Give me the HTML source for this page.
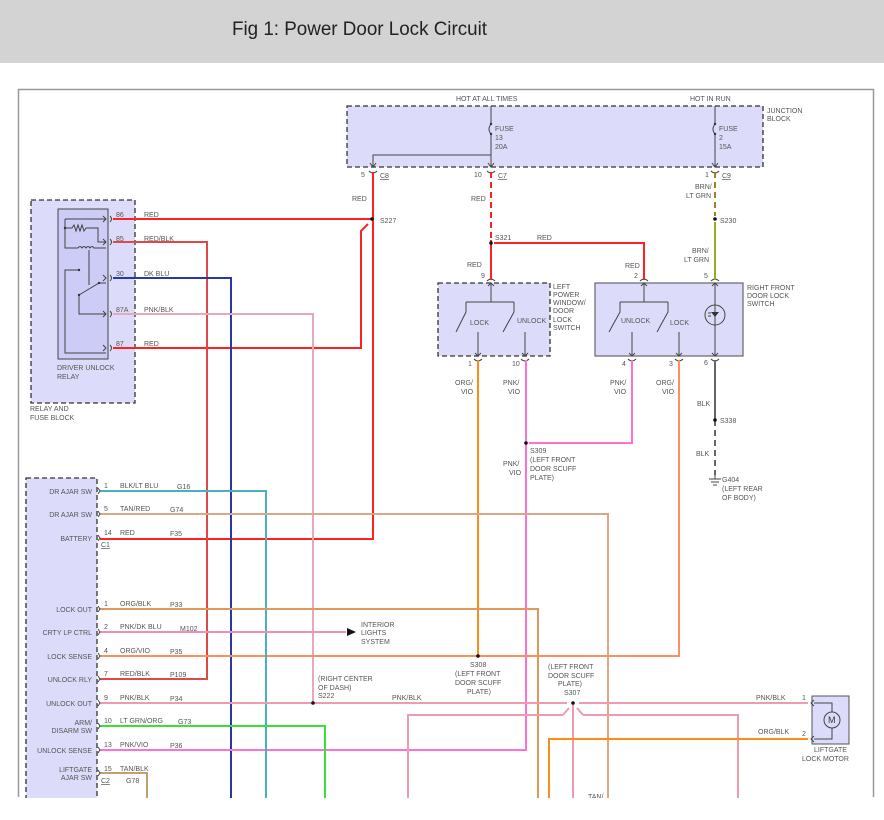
<!DOCTYPE html>
<html><head><meta charset="utf-8"><style>
html,body{margin:0;padding:0;background:#fff;width:884px;height:820px;overflow:hidden}
svg{display:block}
text{font-family:"Liberation Sans",sans-serif;font-size:7px;fill:#555}
.w{fill:none;stroke-width:2}
.k{fill:none;stroke:#444;stroke-width:1}
</style></head><body>
<svg width="884" height="820" viewBox="0 0 884 820" xmlns="http://www.w3.org/2000/svg">
<rect x="0" y="0" width="884" height="63" fill="#d3d3d3"/>
<text x="232" y="35" style="font-size:19px;fill:#222" textLength="255" lengthAdjust="spacingAndGlyphs">Fig 1: Power Door Lock Circuit</text>
<path d="M18.5 797V89.5H873.5V797" fill="none" stroke="#999" stroke-width="1.5"/>

<!-- boxes -->
<rect x="347" y="106" width="416" height="61" fill="#dcdcfa" stroke="#333" stroke-width="1.3" stroke-dasharray="5,3"/>
<rect x="31" y="200" width="104" height="203" fill="#dcdcfa" stroke="#333" stroke-width="1.3" stroke-dasharray="5,3"/>
<rect x="58" y="209" width="50" height="150" fill="#ccccf6" stroke="#444" stroke-width="1"/>
<rect x="438" y="283" width="112" height="73" fill="#dcdcfa" stroke="#333" stroke-width="1.3" stroke-dasharray="5,3"/>
<rect x="595" y="283" width="148" height="73" fill="#dcdcfa" stroke="#666" stroke-width="1.2"/>
<rect x="26" y="478" width="71" height="330" fill="#dcdcfa" stroke="#333" stroke-width="1.3" stroke-dasharray="5,3"/>
<rect x="812" y="696" width="37" height="48" fill="#dcdcfa" stroke="#555" stroke-width="1"/>

<!-- junction internals -->
<path class="k" d="M491 106V124M491 134V167M491 155H373V167M715 106V124M715 134V167"/>
<path class="k" d="M491 124q-4 5 0 10M715 124q-4 5 0 10"/>
<circle cx="491" cy="124" r="1.2" fill="#333"/><circle cx="491" cy="134" r="1.2" fill="#333"/>
<circle cx="715" cy="124" r="1.2" fill="#333"/><circle cx="715" cy="134" r="1.2" fill="#333"/>
<path class="k" d="M370 163l3 4 3-4M488 163l3 4 3-4M712 163l3 4 3-4"/>
<path class="k" d="M369 171q4 4 8 0M487 171q4 4 8 0M711 171q4 4 8 0"/>
<text x="456" y="101">HOT AT ALL TIMES</text><text x="690" y="101">HOT IN RUN</text>
<text x="767" y="113">JUNCTION</text><text x="767" y="121">BLOCK</text>
<text x="495" y="131">FUSE</text><text x="495" y="140">13</text><text x="495" y="149">20A</text>
<text x="719" y="131">FUSE</text><text x="719" y="140">2</text><text x="719" y="149">15A</text>
<text x="361" y="177">5</text><text x="380" y="178" style="text-decoration:underline">C8</text>
<text x="474" y="177">10</text><text x="498" y="178" style="text-decoration:underline">C7</text>
<text x="705" y="177">1</text><text x="722" y="178" style="text-decoration:underline">C9</text>

<!-- relay internals -->
<path class="k" d="M65 219H106M65 219V248H78M65 228H72l2-3 2 6 2-6 2 6 2-6 2 6 2-3H98V242H106M78 248q2-3 4 0q2-3 4 0q2-3 4 0q2-3 4 0H106M89 250V285M79 270H65V353H106M79 295l20-12H106M79 295V314H106"/>
<circle cx="79" cy="270" r="1.2" fill="#333"/><circle cx="79" cy="295" r="1.2" fill="#333"/><circle cx="99" cy="283" r="1.2" fill="#333"/><circle cx="65" cy="228" r="1.2" fill="#333"/>
<path class="k" d="M103 216l3 3-3 3M103 239l3 3-3 3M103 275l3 3-3 3M103 311l3 3-3 3M103 345l3 3-3 3M110 216q3 3 0 6M110 239q3 3 0 6M110 275q3 3 0 6M110 311q3 3 0 6M110 345q3 3 0 6"/>
<text x="116" y="217">86</text><text x="116" y="241">85</text><text x="116" y="276">30</text><text x="116" y="312">87A</text><text x="116" y="346">87</text>
<text x="144" y="217">RED</text><text x="144" y="241">RED/BLK</text><text x="144" y="276">DK BLU</text><text x="144" y="312">PNK/BLK</text><text x="144" y="346">RED</text>
<text x="57" y="370">DRIVER UNLOCK</text><text x="57" y="379">RELAY</text>
<text x="30" y="411">RELAY AND</text><text x="30" y="420">FUSE BLOCK</text>

<!-- switches -->
<path class="k" d="M491 283V302M466 302H514M466 302V312L456 332M478 332V356M514 302V312L503 332M525 332V356"/>
<path class="k" d="M644 283V302M620 302H668M620 302V312L609 332M632 332V356M668 302V312L657 332M679 332V356M715 283V356"/>
<circle cx="715" cy="315" r="10" fill="none" stroke="#444"/>
<path d="M711 312h8l-4 5z" fill="#333"/><path class="k" d="M708 313h3M708 316h3"/>
<path class="k" d="M488 286l3-3 3 3M641 286l3-3 3 3M712 286l3-3 3 3M475 353l3 3 3-3M522 353l3 3 3-3M629 353l3 3 3-3M676 353l3 3 3-3M712 353l3 3 3-3"/>
<path class="k" d="M487 281q4-4 8 0M640 281q4-4 8 0M711 281q4-4 8 0M474 359q4 4 8 0M521 359q4 4 8 0M628 359q4 4 8 0M675 359q4 4 8 0M711 359q4 4 8 0"/>
<text x="470" y="325">LOCK</text><text x="517" y="323">UNLOCK</text>
<text x="621" y="323">UNLOCK</text><text x="670" y="325">LOCK</text>
<text x="553" y="289">LEFT</text><text x="553" y="297">POWER</text><text x="553" y="305">WINDOW/</text><text x="553" y="313">DOOR</text><text x="553" y="322">LOCK</text><text x="553" y="330">SWITCH</text>
<text x="747" y="290">RIGHT FRONT</text><text x="747" y="298">DOOR LOCK</text><text x="747" y="306">SWITCH</text>
<text x="481" y="278">9</text><text x="634" y="278">2</text><text x="704" y="278">5</text>
<text x="468" y="366">1</text><text x="512" y="366">10</text><text x="622" y="366">4</text><text x="669" y="366">3</text><text x="704" y="365">6</text>

<!-- wires -->
<g class="w">
<path stroke="#ff2020" d="M373 172V539H100M113 219H372M113 348H361V231L368 224"/>
<path stroke="#ff2020" stroke-dasharray="6,4" d="M491 172V240"/>
<path stroke="#ff2020" d="M491 240V280M494 243H644V280"/>
<path stroke="#a08020" stroke-dasharray="6,4" d="M715 172V216"/>
<path stroke="#90b020" d="M715 222V280"/>
<path stroke="#666" d="M715 360V420"/>
<path stroke="#666" stroke-dasharray="6,4" d="M715 420V475"/>
<path stroke="#e04848" d="M113 242H207V679H100"/>
<path stroke="#2838a8" d="M113 278H231V800"/>
<path stroke="#e8a8b8" d="M113 314H313V703"/>
<path stroke="#ff8c1a" d="M478 360V656"/>
<path stroke="#ff70d0" d="M526 360V750H100M529 443H632V360"/>
<path stroke="#f89060" d="M679 360V656H100"/>
<path stroke="#48b0c0" d="M100 491H266V800"/>
<path stroke="#d8a888" d="M100 514H608V800"/>
<path stroke="#e0985c" d="M100 609H538V800"/>
<path stroke="#f090b8" d="M100 632H346"/>
<path stroke="#f09ab0" d="M100 703H567M579 703H808M563 715H408V800M583 715H738V800M573 703V800"/>
<path stroke="#38e038" d="M100 726H325V800"/>
<path stroke="#ff8c1a" d="M808 739H549V800"/>
<path stroke="#c0a070" d="M100 773H147V800"/>
</g>
<path d="M563 715l6-7M583 715l-6-7" stroke="#f09ab0" stroke-width="2"/>
<path d="M347 628l9 4-9 4z" fill="#111"/>
<g fill="#111"><circle cx="372" cy="219" r="1.8"/><circle cx="491" cy="243" r="1.8"/><circle cx="715" cy="219" r="1.8"/><circle cx="715" cy="420" r="1.8"/><circle cx="526" cy="443" r="1.8"/><circle cx="478" cy="656" r="1.8"/><circle cx="313" cy="703" r="1.8"/><circle cx="573" cy="703" r="1.8"/></g>
<path class="k" d="M709 479h12M711 482h8M713 485h4M715 475v4"/>

<!-- wire labels -->
<text x="352" y="201">RED</text><text x="380" y="223">S227</text>
<text x="471" y="201">RED</text><text x="495" y="240">S321</text><text x="537" y="240">RED</text><text x="467" y="267">RED</text><text x="625" y="268">RED</text>
<text x="695" y="189">BRN/</text><text x="686" y="198">LT GRN</text><text x="720" y="223">S230</text>
<text x="692" y="253">BRN/</text><text x="684" y="262">LT GRN</text>
<text x="455" y="385">ORG/</text><text x="461" y="394">VIO</text><text x="503" y="385">PNK/</text><text x="508" y="394">VIO</text>
<text x="610" y="385">PNK/</text><text x="614" y="394">VIO</text><text x="656" y="385">ORG/</text><text x="662" y="394">VIO</text>
<text x="697" y="406">BLK</text><text x="720" y="423">S338</text><text x="696" y="456">BLK</text>
<text x="722" y="482">G404</text><text x="722" y="491">(LEFT REAR</text><text x="722" y="500">OF BODY)</text>
<text x="530" y="453">S309</text><text x="530" y="462">(LEFT FRONT</text><text x="530" y="471">DOOR SCUFF</text><text x="530" y="480">PLATE)</text>
<text x="503" y="466">PNK/</text><text x="509" y="475">VIO</text>
<text x="470" y="667">S308</text><text x="455" y="676">(LEFT FRONT</text><text x="455" y="685">DOOR SCUFF</text><text x="467" y="694">PLATE)</text>
<text x="548" y="669">(LEFT FRONT</text><text x="548" y="678">DOOR SCUFF</text><text x="558" y="686">PLATE)</text><text x="564" y="695">S307</text>
<text x="318" y="681">(RIGHT CENTER</text><text x="318" y="690">OF DASH)</text><text x="318" y="698">S222</text>
<text x="392" y="700">PNK/BLK</text>
<text x="361" y="627">INTERIOR</text><text x="361" y="635">LIGHTS</text><text x="361" y="644">SYSTEM</text>
<text x="756" y="700">PNK/BLK</text><text x="758" y="734">ORG/BLK</text>
<text x="802" y="700">1</text><text x="802" y="736">2</text>
<text x="814" y="752">LIFTGATE</text><text x="802" y="761">LOCK MOTOR</text>
<text x="588" y="799">TAN/</text>

<!-- motor -->
<path class="k" d="M814 700l-3 3 3 3M814 736l-3 3 3 3M814 703H832V712M814 739H832V728"/>
<circle cx="832" cy="720" r="8" fill="#dcdcfa" stroke="#444"/><text x="828" y="723" style="font-size:9px;fill:#333">M</text>

<!-- module labels -->
<g text-anchor="end">
<text x="92" y="494">DR AJAR SW</text><text x="92" y="517">DR AJAR SW</text><text x="92" y="541">BATTERY</text>
<text x="92" y="612">LOCK OUT</text><text x="92" y="635">CRTY LP CTRL</text><text x="92" y="659">LOCK SENSE</text><text x="92" y="682">UNLOCK RLY</text><text x="92" y="706">UNLOCK OUT</text>
<text x="92" y="725">ARM/</text><text x="92" y="733">DISARM SW</text><text x="92" y="753">UNLOCK SENSE</text><text x="92" y="772">LIFTGATE</text><text x="92" y="780">AJAR SW</text>
</g>
<path class="k" d="M98 488l2 3-2 3M98 511l2 3-2 3M98 535l2 3-2 3M98 606l2 3-2 3M98 629l2 3-2 3M98 653l2 3-2 3M98 676l2 3-2 3M98 700l2 3-2 3M98 723l2 3-2 3M98 747l2 3-2 3M98 770l2 3-2 3"/>
<text x="104" y="488">1</text><text x="120" y="488">BLK/LT BLU</text><text x="177" y="489">G16</text>
<text x="104" y="511">5</text><text x="120" y="511">TAN/RED</text><text x="170" y="512">G74</text>
<text x="104" y="535">14</text><text x="120" y="535">RED</text><text x="170" y="536">F35</text>
<text x="101" y="547" style="text-decoration:underline">C1</text>
<text x="104" y="606">1</text><text x="120" y="606">ORG/BLK</text><text x="170" y="607">P33</text>
<text x="104" y="629">2</text><text x="120" y="629">PNK/DK BLU</text><text x="180" y="631">M102</text>
<text x="104" y="653">4</text><text x="120" y="653">ORG/VIO</text><text x="170" y="654">P35</text>
<text x="104" y="676">7</text><text x="120" y="676">RED/BLK</text><text x="170" y="677">P109</text>
<text x="104" y="700">9</text><text x="120" y="700">PNK/BLK</text><text x="170" y="701">P34</text>
<text x="104" y="723">10</text><text x="120" y="723">LT GRN/ORG</text><text x="178" y="724">G73</text>
<text x="104" y="747">13</text><text x="120" y="747">PNK/VIO</text><text x="170" y="748">P36</text>
<text x="104" y="771">15</text><text x="120" y="771">TAN/BLK</text>
<text x="101" y="783" style="text-decoration:underline">C2</text><text x="126" y="783">G78</text>
<rect x="0" y="798" width="884" height="22" fill="#fff"/>
</svg>
</body></html>
